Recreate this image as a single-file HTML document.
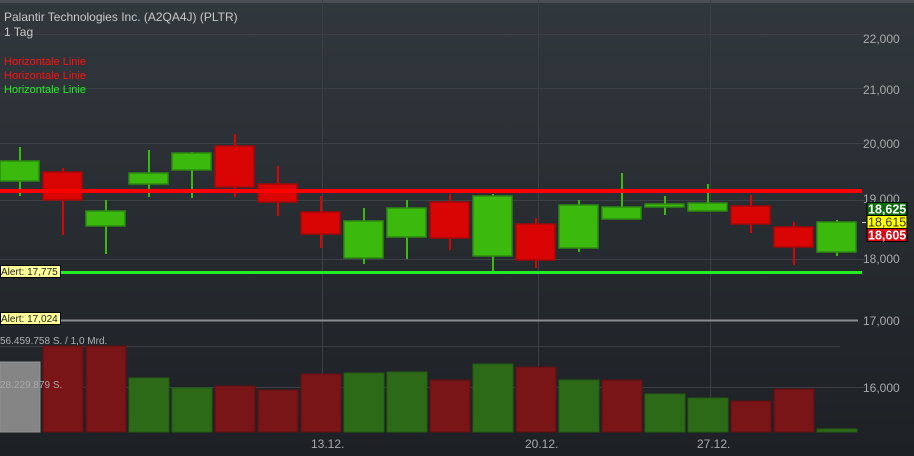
<!DOCTYPE html>
<html><head><meta charset="utf-8"><style>
html,body{margin:0;padding:0;width:914px;height:456px;overflow:hidden;background:#2a2f34;font-family:"Liberation Sans",sans-serif}
svg{display:block}
</style></head><body>
<svg id="s" width="914" height="456" xmlns="http://www.w3.org/2000/svg">
<defs><linearGradient id="bg" x1="0" y1="0" x2="0" y2="1"><stop offset="0" stop-color="#31383d"/><stop offset="1" stop-color="#1d2025"/></linearGradient></defs>
<rect width="914" height="456" fill="url(#bg)"/>
<rect width="914" height="3" fill="#4a4f53"/>
<g stroke="#3a4045" stroke-width="1">
<line x1="0" y1="34.5" x2="865" y2="34.5"/><line x1="0" y1="88.5" x2="865" y2="88.5"/>
<line x1="0" y1="143.5" x2="865" y2="143.5"/><line x1="0" y1="200.5" x2="865" y2="200.5"/>
<line x1="0" y1="259.5" x2="865" y2="259.5"/><line x1="0" y1="387.5" x2="865" y2="387.5"/>
<line x1="0" y1="346.5" x2="840" y2="346.5"/>
<line x1="322.5" y1="0" x2="322.5" y2="432"/><line x1="538.5" y1="0" x2="538.5" y2="432"/><line x1="710.5" y1="0" x2="710.5" y2="432"/>
</g>
<line x1="0" y1="320.5" x2="858" y2="320.5" stroke="#8a8d90" stroke-width="2"/>
<g id="vol"></g>
<g id="c"></g>
<rect x="0" y="189" width="862" height="4" fill="#ff0000"/>
<rect x="0" y="271" width="862" height="3" fill="#22ee22"/>
<g font-size="12" fill="#c8c8c8">
<text x="4" y="21">Palantir Technologies Inc. (A2QA4J) (PLTR)</text>
<text x="4" y="36">1 Tag</text>
</g>
<g font-size="11">
<text x="4" y="65" fill="#ff1010">Horizontale Linie</text>
<text x="4" y="79" fill="#ff1010">Horizontale Linie</text>
<text x="4" y="93" fill="#22ee22">Horizontale Linie</text>
</g>
<g font-size="12" fill="#a9abad">
<text x="863" y="43">22,000</text><text x="863" y="94">21,000</text>
<text x="863" y="148">20,000</text><text x="863" y="203">19,000</text>
<text x="863" y="263">18,000</text><text x="863" y="325">17,000</text>
<text x="863" y="392">16,000</text>
<text x="311" y="448">13.12.</text><text x="525" y="448">20.12.</text><text x="697" y="448">27.12.</text>
</g>
<line x1="862" y1="222.5" x2="866" y2="222.5" stroke="#ccc"/>
<rect x="867" y="202.5" width="40" height="13" fill="#0d6b0d" stroke="#000"/>
<text x="868" y="213.5" font-size="12.5" fill="#fff" font-weight="bold">18,625</text>
<rect x="867" y="215.5" width="40" height="13" fill="#ffff00" stroke="#000"/>
<text x="868" y="226.5" font-size="12.5" fill="#333">18,615</text>
<rect x="867" y="228.5" width="40" height="13" fill="#dd0a14" stroke="#000"/>
<text x="868" y="239.5" font-size="12.5" fill="#fff" font-weight="bold">18,605</text>
<rect x="0.5" y="265.5" width="60" height="12" fill="#ffff99" stroke="#000"/>
<text x="1" y="275" font-size="10" fill="#222">Alert: 17,775</text>
<rect x="0.5" y="312.5" width="60" height="12" fill="#ffff99" stroke="#000"/>
<text x="1" y="322" font-size="10" fill="#222">Alert: 17,024</text>
<text x="0" y="344" font-size="10" fill="#b0b2b4">56.459.758 S. / 1,0 Mrd.</text>
</svg>
<script>
var c=[[1,161,181,147,196],[0,172,200,168,235],[1,211,226,200,254],[1,173,184,150,197],[1,153,170,152,198],[0,146,187,134,197],[0,184,202,166,216],[0,212,234,196,248],[1,221,258,208,264],[1,208,237,200,259],[0,202,238,194,250],[1,196,256,194,271],[0,224,260,218,268],[1,205,248,200,252],[1,207,219,173,219],[1,204,207,196,215],[1,203,211,184,211],[0,206,224,195,233],[0,227,247,222,265],[1,222,252,220,256]];
var v=[[2,362],[0,346],[0,346],[1,378],[1,388],[0,386],[0,390],[0,374],[1,373],[1,372],[0,380],[1,364],[0,367],[1,380],[0,380],[1,394],[1,398],[0,401],[0,389],[1,429]];
var h="",hv="";
c.forEach(function(d,i){var l=43*i-1,cx=43*i+20,g=d[0];
var f=g?"#3bb90d":"#d90505",s=g?"#2c8a12":"#a50808";
h+='<rect x="'+(cx-1)+'" y="'+d[3]+'" width="2" height="'+(d[4]-d[3])+'" fill="'+f+'"/>';
h+='<rect x="'+(l+1)+'" y="'+d[1]+'" width="39" height="'+Math.max(2,d[2]-d[1])+'" fill="'+f+'" stroke="'+s+'" stroke-width="1.5"/>';});
v.forEach(function(d,i){var l=43*i-1;var f=d[0]==2?"#858585":d[0]?"#2d6a17":"#7a1517",s=d[0]==2?"#929292":d[0]?"#245a12":"#5e1012";
hv+='<rect x="'+(l+1)+'" y="'+d[1]+'" width="40" height="'+(432-d[1])+'" fill="'+f+'" stroke="'+s+'"/>';});
document.getElementById("c").innerHTML=h;
document.getElementById("vol").innerHTML=hv+'<text x="0" y="388" font-size="10" fill="#a8a8a8">28.229.879 S.</text>';
</script>
</body></html>
